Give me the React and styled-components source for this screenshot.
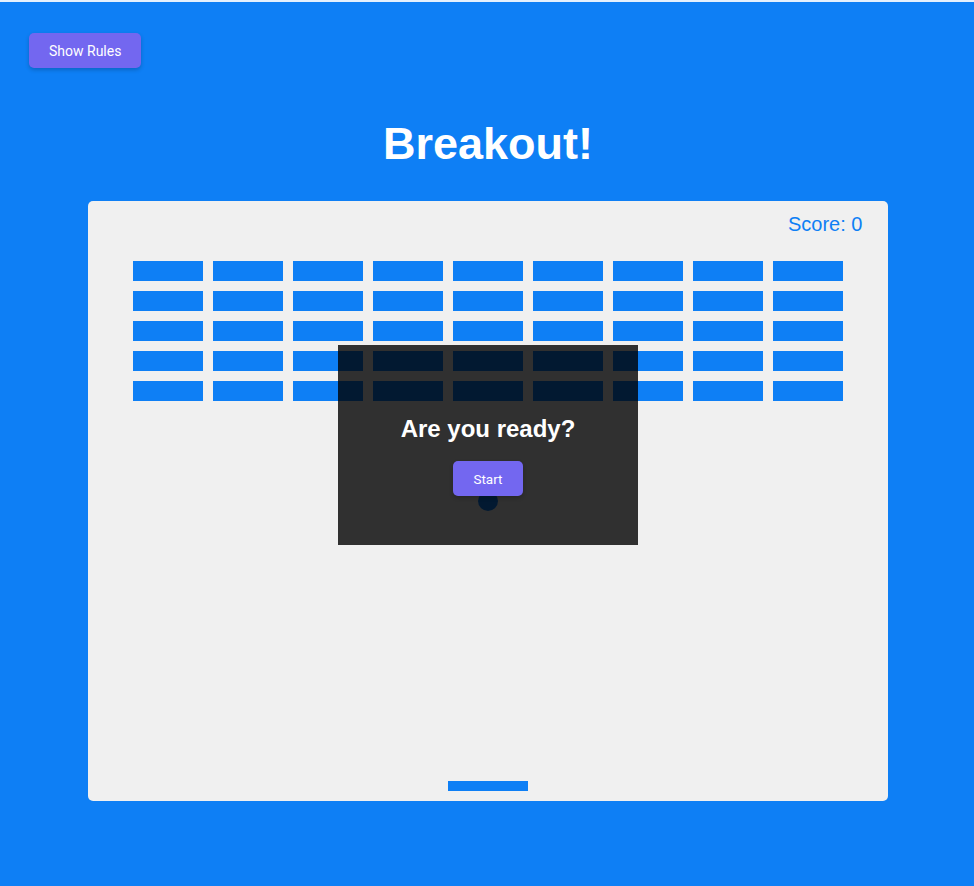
import React from "react";
import styled, { createGlobalStyle } from "styled-components";

const BLUE = "#0e7ff5";
const PURPLE = "#7367f0";

const GlobalStyle = createGlobalStyle`
  html, body {
    margin: 0;
    padding: 0;
  }
  body {
    background: ${BLUE};
    border-top: 2px solid #e4f0fd;
    font-family: "Liberation Sans", Arial, sans-serif;
    min-height: 884px;
  }
`;

const Page = styled.div`
  display: flex;
  flex-direction: column;
  padding: 31px 0 0 2px;
`;

const Header = styled.header`
  display: flex;
  padding-left: 27px;
`;

const Button = styled.button`
  height: 35px;
  padding: 0 20px;
  border: none;
  border-radius: 5px;
  background: ${PURPLE};
  color: #fff;
  font-family: Roboto, "Liberation Sans", sans-serif;
  font-size: ${(p) => (p.$small ? "13.5px" : "14px")};
  cursor: pointer;
  box-shadow: 0 2px 4px rgba(0, 0, 0, 0.2);
`;

const Title = styled.h1`
  margin: 53px 0 35px;
  text-align: center;
  font-size: 45px;
  line-height: 1;
  font-weight: 700;
  color: #fff;
`;

const Board = styled.div`
  position: relative;
  align-self: center;
  width: 800px;
  height: 600px;
  box-sizing: border-box;
  padding: 60px 45px 0;
  background: #f0f0f0;
  border-radius: 5px;
`;

const Score = styled.span`
  position: absolute;
  left: 700px;
  top: 13px;
  font-size: 20px;
  line-height: 1;
  color: ${BLUE};
`;

const Bricks = styled.div`
  display: grid;
  grid-template-columns: repeat(9, 70px);
  grid-auto-rows: 20px;
  gap: 10px;
`;

const Brick = styled.div`
  background: ${BLUE};
`;

const Ball = styled.div`
  position: absolute;
  left: 390px;
  top: 290px;
  width: 20px;
  height: 20px;
  border-radius: 50%;
  background: ${BLUE};
`;

const Paddle = styled.div`
  position: absolute;
  left: 360px;
  top: 580px;
  width: 80px;
  height: 10px;
  background: ${BLUE};
`;

const Overlay = styled.div`
  position: absolute;
  left: 250px;
  top: 144px;
  width: 300px;
  height: 200px;
  background: rgba(0, 0, 0, 0.8);
  display: flex;
  flex-direction: column;
  align-items: center;
  padding-top: 70px;
  box-sizing: border-box;
`;

const Ready = styled.h2`
  margin: 0 0 18px;
  font-size: 24px;
  line-height: 28px;
  font-weight: 700;
  color: #fff;
`;

export default function App() {
  const bricks = Array.from({ length: 45 });
  return (
    <>
      <GlobalStyle />
      <Page>
        <Header>
          <Button>Show Rules</Button>
        </Header>
        <Title>Breakout!</Title>
        <Board>
          <Score>Score: 0</Score>
          <Bricks>
            {bricks.map((_, i) => (
              <Brick key={i} />
            ))}
          </Bricks>
          <Ball />
          <Paddle />
          <Overlay>
            <Ready>Are you ready?</Ready>
            <Button $small>Start</Button>
          </Overlay>
        </Board>
      </Page>
    </>
  );
}
